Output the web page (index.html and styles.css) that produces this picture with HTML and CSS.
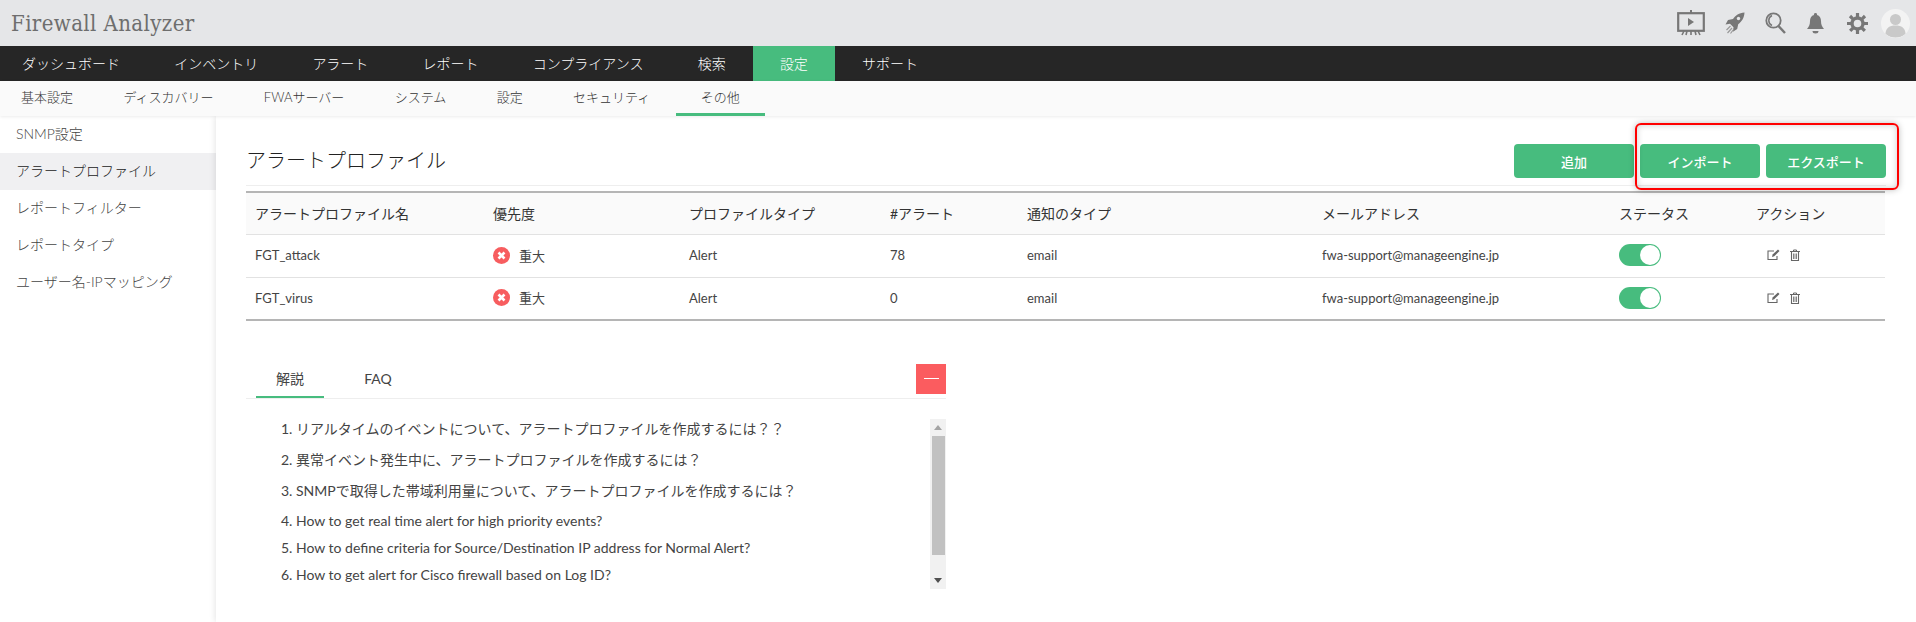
FILE: index.html
```html
<!DOCTYPE html>
<html lang="ja">
<head>
<meta charset="utf-8">
<title>Firewall Analyzer</title>
<link rel="stylesheet" href="styles.css">
</head>
<body>
<header class="topbar">
  <div class="brand">Firewall Analyzer</div>
  <div class="tools">
    <svg class="ic-demo" width="28" height="26" viewBox="0 0 28 26"><path d="M14 0v3" stroke="#777" stroke-width="2"/><rect x="1.2" y="3.2" width="25.6" height="17.6" fill="none" stroke="#777" stroke-width="2.2"/><path d="M11 8l6 4-6 4z" fill="#777"/><path d="M7 21l-2 4M21 21l2 4M14 21v4M10 21l-1 4M18 21l1 4" stroke="#777" stroke-width="1.6"/></svg>
    <svg class="ic-rocket" width="20" height="23" viewBox="0 0 20 23"><path d="M19.500 .5c-5.500 .4-9 2.800-11.500 6.500L3 8 .5 12.500l4.500-.8 3.500 3.500-.6 4.500 4.300-2.600 1-4.800C16.700 9.500 19.200 6 19.500 .5z" fill="#777"/><circle cx="13.500" cy="6.500" r="1.700" fill="#e5e6e8"/><path d="M5.500 14l-4 4M7 16l-4.500 5M8.500 17.500l-3 4" stroke="#999" stroke-width="1.200"/></svg>
    <svg class="ic-search" width="21" height="22" viewBox="0 0 21 22"><circle cx="8.500" cy="8.500" r="7.200" fill="none" stroke="#777" stroke-width="1.800"/><path d="M13.500 14l6.500 7" stroke="#777" stroke-width="2.400"/><path d="M7 3.500a5.500 5.500 0 0 0 0 10" fill="none" stroke="#777" stroke-width="1.500"/></svg>
    <svg class="ic-bell" width="17" height="21" viewBox="0 0 17 21"><path d="M8.500 0a1.500 1.500 0 0 1 1.500 2c2.800.8 4 3 4 6 0 4 1 5.500 3 8H0c2-2.500 3-4 3-8 0-3 1.200-5.200 4-6a1.500 1.500 0 0 1 1.500-2z" fill="#777"/><path d="M5.500 18h6a3 2.500 0 0 1-6 0z" fill="#777"/></svg>
    <svg class="ic-gear" width="21" height="21" viewBox="0 0 21 21"><circle cx="10.500" cy="10.500" r="5.500" fill="none" stroke="#777" stroke-width="3.400"/><path d="M10.500 0v21M0 10.500h21M3 3l15 15M18 3L3 18" stroke="#777" stroke-width="3.200" stroke-dasharray="4 13"/></svg>
    <div class="avatar"><svg width="29" height="29" viewBox="0 0 29 29"><circle cx="14.500" cy="10.500" r="5.500" fill="#c9c9c9"/><path d="M4.500 25c0-6 4-8.500 10-8.500s10 2.500 10 8.500c-3 2.500-6.500 3.500-10 3.500s-7-1-10-3.500z" fill="#c9c9c9"/></svg></div>
  </div>
</header>

<nav class="mainnav">
  <a class="mainnav-item">ダッシュボード</a>
  <a class="mainnav-item">インベントリ</a>
  <a class="mainnav-item">アラート</a>
  <a class="mainnav-item">レポート</a>
  <a class="mainnav-item">コンプライアンス</a>
  <a class="mainnav-item">検索</a>
  <a class="mainnav-item is-active">設定</a>
  <a class="mainnav-item">サポート</a>
</nav>

<nav class="subnav">
  <a class="subnav-item">基本設定</a>
  <a class="subnav-item">ディスカバリー</a>
  <a class="subnav-item">FWAサーバー</a>
  <a class="subnav-item">システム</a>
  <a class="subnav-item">設定</a>
  <a class="subnav-item">セキュリティ</a>
  <a class="subnav-item is-active">その他</a>
</nav>

<div class="layout">
  <aside class="sidebar">
    <a class="side-item">SNMP設定</a>
    <a class="side-item is-active">アラートプロファイル</a>
    <a class="side-item">レポートフィルター</a>
    <a class="side-item">レポートタイプ</a>
    <a class="side-item">ユーザー名-IPマッピング</a>
  </aside>

  <main class="content">
    <div class="title-row">
      <h1 class="title">アラートプロファイル</h1>
      <div class="actions">
        <button class="btn">追加</button>
        <button class="btn">インポート</button>
        <button class="btn">エクスポート</button>
        <div class="callout"></div>
      </div>
    </div>

    <table class="grid">
      <thead>
        <tr>
          <th>アラートプロファイル名</th><th>優先度</th><th>プロファイルタイプ</th><th>#アラート</th><th>通知のタイプ</th><th>メールアドレス</th><th>ステータス</th><th>アクション</th>
        </tr>
      </thead>
      <tbody>
        <tr>
          <td>FGT_attack</td>
          <td><span class="sev"><svg width="17" height="17" viewBox="0 0 17 17"><circle cx="8.500" cy="8.500" r="8.500" fill="#f75d5f"/><path d="M5.500 5.500l6 6M11.500 5.500l-6 6" stroke="#fff" stroke-width="2.600"/></svg>重大</span></td>
          <td>Alert</td><td>78</td><td>email</td><td>fwa-support@manageengine.jp</td>
          <td><span class="toggle"></span></td>
          <td><span class="row-icons"><svg width="13" height="12" viewBox="0 0 13 12"><path d="M10 7v3.500H1V2h6" fill="none" stroke="#666" stroke-width="1.100"/><path d="M5 8l.6-2.400L11 .5l1.500 1.500L7.200 7.300z" fill="#666"/></svg><svg width="10" height="12" viewBox="0 0 10 12"><path d="M0 2.500h10M3.500 2.500V1h3v1.500" fill="none" stroke="#666" stroke-width="1"/><path d="M1.500 3v8.500h7V3" fill="none" stroke="#666" stroke-width="1.100"/><path d="M3.500 4.500v5.500M5 4.500v5.500M6.500 4.500v5.500" stroke="#666" stroke-width=".8"/></svg></span></td>
        </tr>
        <tr>
          <td>FGT_virus</td>
          <td><span class="sev"><svg width="17" height="17" viewBox="0 0 17 17"><circle cx="8.500" cy="8.500" r="8.500" fill="#f75d5f"/><path d="M5.500 5.500l6 6M11.500 5.500l-6 6" stroke="#fff" stroke-width="2.600"/></svg>重大</span></td>
          <td>Alert</td><td>0</td><td>email</td><td>fwa-support@manageengine.jp</td>
          <td><span class="toggle"></span></td>
          <td><span class="row-icons"><svg width="13" height="12" viewBox="0 0 13 12"><path d="M10 7v3.500H1V2h6" fill="none" stroke="#666" stroke-width="1.100"/><path d="M5 8l.6-2.400L11 .5l1.500 1.500L7.200 7.300z" fill="#666"/></svg><svg width="10" height="12" viewBox="0 0 10 12"><path d="M0 2.500h10M3.500 2.500V1h3v1.500" fill="none" stroke="#666" stroke-width="1"/><path d="M1.500 3v8.500h7V3" fill="none" stroke="#666" stroke-width="1.100"/><path d="M3.500 4.500v5.500M5 4.500v5.500M6.500 4.500v5.500" stroke="#666" stroke-width=".8"/></svg></span></td>
        </tr>
      </tbody>
    </table>

    <section class="help">
      <div class="help-tabs">
        <a class="help-tab is-active">解説</a>
        <a class="help-tab">FAQ</a>
        <button class="collapse" aria-label="collapse"></button>
      </div>
      <div class="help-body">
        <ol class="faq">
          <li>リアルタイムのイベントについて、アラートプロファイルを作成するには？？</li>
          <li>異常イベント発生中に、アラートプロファイルを作成するには？</li>
          <li>SNMPで取得した帯域利用量について、アラートプロファイルを作成するには？</li>
          <li class="en">How to get real time alert for high priority events?</li>
          <li class="en">How to define criteria for Source/Destination IP address for Normal Alert?</li>
          <li class="en">How to get alert for Cisco firewall based on Log ID?</li>
        </ol>
        <div class="scrollbar"><span class="arrow-up"></span><span class="thumb"></span><span class="arrow-down"></span></div>
      </div>
    </section>
  </main>
</div>
</body>
</html>
```

FILE: styles.css
```css
* { box-sizing: border-box; }
html, body { margin: 0; height: 100%; }
body {
  width: 1916px;
  height: 622px;
  overflow: hidden;
  background: #fff;
  color: #333;
  font-family: Lato, "Noto Sans CJK JP", sans-serif;
  font-size: 13px;
  font-weight: 300;
}
.topbar {
  height: 46px;
  background: #e5e6e8;
  display: flex;
  align-items: center;
  justify-content: space-between;
}
.brand {
  margin-left: 11px;
  font-family: "DejaVu Serif", serif;
  font-stretch: condensed;
  font-size: 22px;
  font-weight: 400;
  color: #6e6e6e;
  letter-spacing: .4px;
}
.tools { display: flex; align-items: center; margin-right: 6px; }
.ic-demo { margin-right: 20px; }
.ic-rocket { margin-right: 20px; }
.ic-search { margin-right: 21px; }
.ic-bell { margin-right: 23px; }
.ic-gear { margin-right: 13px; }
.avatar {
  width: 29px;
  height: 29px;
  border-radius: 50%;
  background: #f3f3f3;
  overflow: hidden;
}
.avatar svg { display: block; }

.mainnav { height: 35px; background: #262626; display: flex; }
.mainnav-item {
  padding: 0 27.1px;
  color: #fff;
  font-size: 14px;
  line-height: 35px;
}
.mainnav-item:first-child { padding-left: 22px; }
.mainnav-item.is-active { background: #47bc7e; }

.subnav {
  height: 35px;
  background: #fafafa;
  display: flex;
  padding-left: 21px;
  position: relative;
  z-index: 2;
  box-shadow: 0 1px 3px rgba(0,0,0,.08);
}
.subnav-item {
  padding: 0 25.2px;
  font-size: 13px;
  line-height: 33px;
  color: #333;
  height: 35px;
}
.subnav-item:first-child { padding-left: 0; }
.subnav-item.is-active { border-bottom: 3px solid #47bc7e; }

.layout { display: flex; height: 506px; }
.sidebar {
  width: 216px;
  flex: none;
  background: #fff;
}
.side-item {
  display: block;
  height: 37px;
  padding-left: 16px;
  line-height: 35px;
  font-size: 14px;
  color: #444;
}
.side-item.is-active { background: #f0f0f2; color: #222; }

.content {
  flex: 1;
  padding: 28px 30px 0 30px;
  min-width: 0;
  position: relative;
  background: #fff;
  box-shadow: -1px 0 6px rgba(0,0,0,.1);
}
.title-row {
  display: flex;
  justify-content: space-between;
  height: 42px;
  border-bottom: 1px solid #eee;
  margin-bottom: 5px;
}
.title { margin: 0; font-size: 20px; font-weight: 300; line-height: 32px; color: #222; }
.actions { display: flex; gap: 6px; position: relative; height: 34px; }
.btn {
  width: 120px;
  height: 34px;
  border: 0;
  border-radius: 4px;
  background: #47bc7e;
  color: #fff;
  font: 500 13px Lato, "Noto Sans CJK JP", sans-serif;
  padding: 0;
}
.callout {
  position: absolute;
  left: 121px;
  top: -21px;
  width: 264px;
  height: 67px;
  border: 2px solid #f00;
  border-radius: 6px;
  box-shadow: 0 0 6px rgba(0,0,0,.25), inset 0 0 6px rgba(0,0,0,.2);
  pointer-events: none;
}

.grid {
  width: 1639px;
  table-layout: fixed;
  border-collapse: collapse;
  border-top: 2px solid #b5b5b5;
  border-bottom: 2px solid #b5b5b5;
}
.grid th {
  height: 42px;
  padding: 0 0 0 9px;
  background: #fafafa;
  font-weight: 400;
  font-size: 14px;
  text-align: left;
  color: #333;
  border-bottom: 1px solid #e2e2e2;
}
.grid td {
  height: 43px;
  padding: 0 0 1px 9px;
  color: #444;
  font-size: 13px;
  font-weight: 400;
  border-bottom: 1px solid #e2e2e2;
}
.grid tbody tr:last-child td { border-bottom: 0; }
.grid th:nth-child(1) { width: 238px; }
.grid th:nth-child(2) { width: 196px; }
.grid th:nth-child(3) { width: 201px; }
.grid th:nth-child(4) { width: 137px; }
.grid th:nth-child(5) { width: 295px; }
.grid th:nth-child(6) { width: 297px; }
.grid th:nth-child(7) { width: 137px; }
.grid th:nth-child(8) { width: 138px; }
.sev { display: flex; align-items: center; gap: 9px; }
.sev svg { flex: none; }
.toggle {
  display: block;
  width: 42px;
  height: 22px;
  border-radius: 11px;
  background: #47bc7e;
  position: relative;
}
.toggle::after {
  content: "";
  position: absolute;
  right: 1px;
  top: 1px;
  width: 20px;
  height: 20px;
  border-radius: 50%;
  background: #fff;
}
.row-icons { display: flex; align-items: center; gap: 10px; padding-left: 11px; }

.help { width: 700px; margin-top: 43px; }
.help-tabs {
  height: 35px;
  border-bottom: 1px solid #eee;
  padding-left: 10px;
  display: flex;
  position: relative;
}
.help-tab {
  width: 68px;
  height: 34px;
  margin-right: 25px;
  text-align: center;
  font-size: 14px;
  font-weight: 400;
  line-height: 30px;
  color: #444;
}
.help-tab + .help-tab { width: 40px; margin-left: 9px; }
.help-tab.is-active { border-bottom: 2px solid #47bc7e; }
.collapse {
  position: absolute;
  right: 0;
  top: 0;
  width: 30px;
  height: 30px;
  border: 0;
  padding: 0;
  background: #fb5c5f;
}
.collapse::after {
  content: "";
  position: absolute;
  left: 8px;
  top: 14px;
  width: 15px;
  height: 1px;
  background: #fff;
}
.help-body { display: flex; justify-content: space-between; padding-top: 20px; }
.faq {
  margin: 0;
  padding: 0 0 0 50px;
  font-size: 14px;
  font-weight: 400;
  color: #444;
}
.faq li { height: 31px; line-height: 20px; }
.faq li.en { height: 27px; line-height: 22px; }
.faq li:nth-child(3) { height: 29px; }
.scrollbar {
  width: 16px;
  height: 170px;
  background: #f1f1f1;
  display: flex;
  flex-direction: column;
  align-items: center;
}
.thumb { width: 13px; height: 119px; background: #c1c1c1; }
.arrow-up, .arrow-down { width: 0; height: 0; border-left: 4px solid transparent; border-right: 4px solid transparent; margin: 6px 0; }
.arrow-up { border-bottom: 5px solid #a3a3a3; }
.arrow-down { border-top: 5px solid #505050; margin-top: auto; }
```
